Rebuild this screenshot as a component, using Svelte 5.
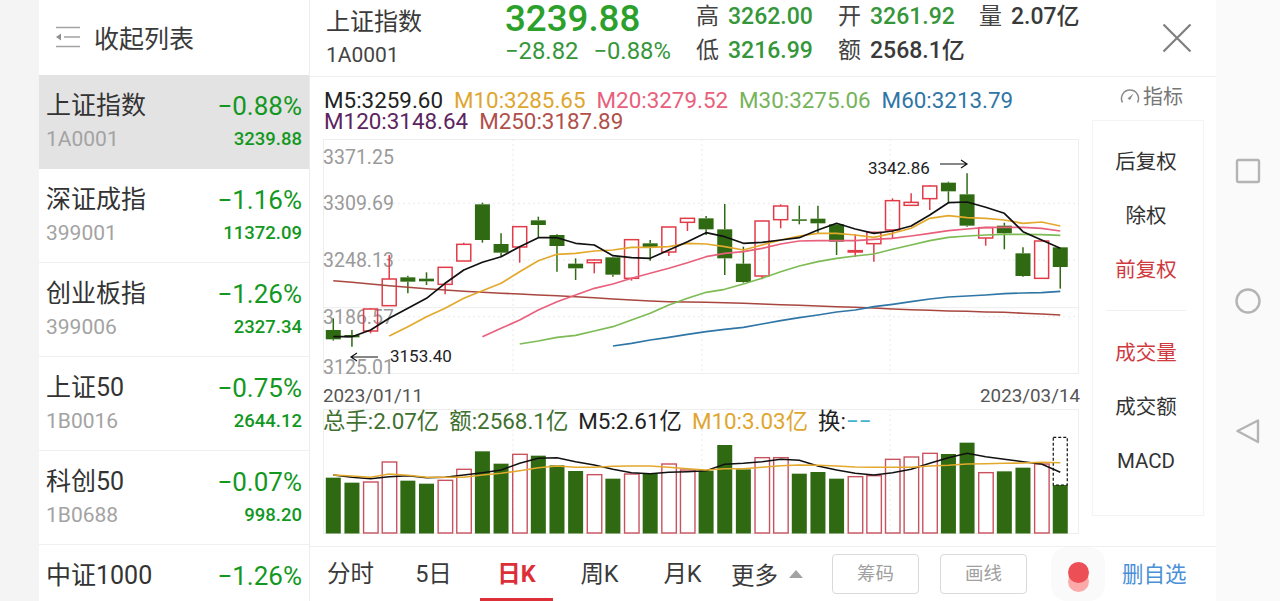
<script>
	const stocks = [
		{ name: '上证指数', code: '1A0001', pct: '−0.88%', price: '3239.88', active: true },
		{ name: '深证成指', code: '399001', pct: '−1.16%', price: '11372.09' },
		{ name: '创业板指', code: '399006', pct: '−1.26%', price: '2327.34' },
		{ name: '上证50', code: '1B0016', pct: '−0.75%', price: '2644.12' },
		{ name: '科创50', code: '1B0688', pct: '−0.07%', price: '998.20' },
		{ name: '中证1000', code: '1B0852', pct: '−1.26%', price: '6761.44' }
	];

	const tabs = ['分时', '5日', '日K', '周K', '月K'];

	const xAt = (i) => 333.3 + 18.64 * i;
	const kY = (z) => 130 + z / 3;
	const vY = (z) => 380 + z / 3;

	// hi, top, bottom, lo, red
	const candles = [
		[565, 600, 628, 632, 0], [600, 615, 622, 650, 0], [535, 537, 603, 610, 1], [375, 447, 527, 527, 1],
		[437, 442, 455, 490, 0], [427, 446, 454, 465, 0], [412, 412, 463, 493, 1], [338, 343, 393, 393, 1],
		[218, 223, 330, 338, 0], [310, 342, 368, 380, 0], [289, 290, 351, 398, 1], [260, 271, 285, 322, 0],
		[313, 315, 348, 425, 0], [385, 401, 415, 450, 0], [388, 390, 398, 430, 1], [380, 382, 434, 440, 0],
		[329, 329, 445, 452, 1], [330, 340, 352, 392, 0], [290, 291, 366, 378, 1], [264, 265, 277, 303, 1],
		[258, 265, 298, 315, 0], [222, 298, 385, 435, 0], [350, 401, 456, 458, 0], [272, 273, 438, 448, 1],
		[223, 228, 269, 295, 1], [227, 268, 271, 283, 0], [227, 266, 280, 312, 0], [280, 283, 335, 375, 0],
		[313, 362, 366, 380, 1], [305, 307, 341, 395, 1], [205, 212, 300, 327, 1], [190, 217, 226, 226, 1],
		[165, 168, 206, 240, 1], [155, 158, 184, 220, 0], [130, 193, 287, 290, 0], [292, 293, 324, 347, 1],
		[278, 287, 310, 358, 0], [352, 370, 438, 440, 0], [332, 333, 445, 447, 1], [352, 352, 411, 476, 0]
	];

	const ma5 = [620, 620, 600, 565, 535, 505, 460, 420, 397, 380, 350, 323, 323, 340, 345, 377, 383, 385, 360, 335, 308, 320, 340, 337, 330, 323, 300, 280, 297, 310, 303, 288, 255, 218, 216, 232, 250, 305, 330, 355];
	const ma10 = [618, 590, 560, 535, 505, 482, 460, 425, 392, 373, 370, 363, 360, 352, 352, 350, 340, 342, 350, 360, 345, 330, 318, 310, 310, 315, 322, 310, 295, 265, 257, 263, 265, 270, 280, 276, 288];
	const ma20 = [620, 595, 570, 540, 515, 495, 475, 462, 445, 430, 415, 398, 380, 370, 365, 355, 342, 333, 332, 332, 332, 328, 325, 318, 310, 302, 297, 292, 292, 292, 295, 303];
	const ma30 = [642, 633, 622, 616, 603, 590, 570, 550, 525, 505, 487, 478, 462, 445, 425, 408, 395, 385, 378, 372, 358, 345, 332, 322, 318, 315, 313, 313, 314, 316];
	const ma60 = [648, 640, 630, 622, 613, 605, 598, 592, 582, 572, 563, 555, 546, 540, 530, 523, 515, 507, 501, 498, 495, 491, 489, 488, 484];
	const ma250 = [452, 457, 462, 467, 472, 476, 480, 484, 487, 490, 492, 495, 497, 500, 503, 507, 510, 513, 515, 516, 517, 518, 520, 522, 524, 526, 528, 530, 532, 534, 537, 539, 541, 543, 544, 546, 547, 550, 552, 555];

	const line = (vals, start, toY) => vals.map((v, i) => `${xAt(start + i).toFixed(1)},${toY(v).toFixed(1)}`).join(' ');

	const kLines = [
		{ pts: ma250, start: 0, color: '#a8473f', w: 1.6 },
		{ pts: ma60, start: 15, color: '#2f76a6', w: 1.7 },
		{ pts: ma30, start: 10, color: '#7dbb55', w: 1.7 },
		{ pts: ma20, start: 8, color: '#e8607c', w: 1.7 },
		{ pts: ma10, start: 3, color: '#e3a92c', w: 1.7 },
		{ pts: ma5, start: 0, color: '#111111', w: 1.7 }
	];

	// bar top, red
	const volumes = [
		[293, 0], [308, 0], [306, 1], [246, 1], [302, 0], [311, 0], [301, 1], [268, 1], [214, 0], [251, 0],
		[223, 1], [227, 0], [256, 0], [273, 0], [284, 1], [296, 0], [282, 1], [282, 0], [252, 1], [270, 1],
		[272, 0], [195, 0], [268, 0], [233, 1], [233, 1], [281, 0], [276, 0], [296, 0], [290, 1], [287, 1],
		[238, 1], [231, 1], [220, 1], [222, 0], [188, 0], [278, 1], [274, 0], [263, 0], [252, 1], [315, 0]
	];

	const vol5 = [285, 292, 296, 290, 287, 293, 292, 285, 278, 270, 250, 235, 233, 245, 255, 268, 278, 281, 277, 275, 272, 253, 250, 245, 238, 241, 258, 270, 280, 285, 278, 268, 250, 233, 220, 230, 238, 245, 252, 277];
	const vol10 = [285, 288, 292, 282, 286, 292, 292, 292, 285, 280, 272, 263, 258, 262, 262, 259, 258, 258, 262, 266, 270, 266, 266, 262, 257, 255, 256, 258, 261, 262, 262, 262, 258, 256, 252, 251, 250, 249, 247, 248];
</script>

<div class="page">
	<div class="gutter"></div>

	<aside class="sidebar">
		<div class="collapse">
			<svg class="collapse-icon" width="26" height="22" viewBox="0 0 26 22">
				<path d="M1 1.5H25M9 11H25M1 20.5H25" stroke="#a3a3a3" stroke-width="1.6" fill="none" />
				<path d="M1 11L6 7.5V14.5Z" fill="#8f8f8f" />
			</svg>
			<span>收起列表</span>
		</div>
		{#each stocks as s}
			<div class="stock" class:active={s.active}>
				<div class="stock-row">
					<span class="stock-name">{s.name}</span>
					<span class="stock-pct">{s.pct}</span>
				</div>
				<div class="stock-row sub">
					<span class="stock-code">{s.code}</span>
					<span class="stock-price">{s.price}</span>
				</div>
			</div>
		{/each}
	</aside>

	<main class="main">
		<header class="head">
			<div class="title">
				<div class="title-name">上证指数</div>
				<div class="title-code">1A0001</div>
			</div>
			<div class="quote">
				<div class="quote-price">3239.88</div>
				<div class="quote-change"><span>−28.82</span><span>−0.88%</span></div>
			</div>
			<div class="stats">
				<span class="lbl">高</span><span class="val">3262.00</span>
				<span class="lbl">开</span><span class="val">3261.92</span>
				<span class="lbl">量</span><span class="val dark">2.07亿</span>
				<span class="lbl">低</span><span class="val">3216.99</span>
				<span class="lbl">额</span><span class="val dark">2568.1亿</span>
			</div>
			<svg class="close" width="32" height="32" viewBox="0 0 32 32">
				<path d="M2.5 2.5L29.5 29.5M29.5 2.5L2.5 29.5" stroke="#7f7f7f" stroke-width="2.2" fill="none" />
			</svg>
		</header>

		<div class="body">
			<section class="charts">
				<div class="legend">
					<div class="legend-row">
						<span class="c-black">M5:3259.60</span>
						<span class="c-gold">M10:3285.65</span>
						<span class="c-pink">M20:3279.52</span>
						<span class="c-green">M30:3275.06</span>
						<span class="c-blue">M60:3213.79</span>
					</div>
					<div class="legend-row">
						<span class="c-purple">M120:3148.64</span>
						<span class="c-brown">M250:3187.89</span>
					</div>
				</div>

				<svg class="kchart" width="757" height="235" viewBox="323 139 757 235">
					<rect x="323.5" y="139.5" width="755" height="234" fill="none" stroke="#eeeeee" />
					<line class="dot" x1="323" x2="1079" y1={kY(220)} y2={kY(220)} />
					<line class="dot" x1="323" x2="1079" y1={kY(390)} y2={kY(390)} />
					<line class="dot" x1="323" x2="1079" y1={kY(560)} y2={kY(560)} />
					<line x1="323" x2="1079" y1={kY(533)} y2={kY(533)} stroke="#ececec" />
					<line class="dot" x1="513" x2="513" y1="139" y2="373" />
					<line class="dot" x1="702" x2="702" y1="139" y2="373" />
					<line class="dot" x1="890" x2="890" y1="139" y2="373" />

					<text class="axis" x="323" y="164">3371.25</text>
					<text class="axis" x="323" y="210">3309.69</text>
					<text class="axis" x="323" y="267">3248.13</text>
					<text class="axis" x="323" y="324">3186.57</text>
					<text class="axis" x="323" y="374">3125.01</text>

					{#each candles as [hi, top, bottom, lo, red], i}
						{@const color = red ? '#e23b48' : '#2f6a12'}
						<line x1={xAt(i)} x2={xAt(i)} y1={kY(hi)} y2={kY(top)} stroke={color} stroke-width="1.5" />
						<line x1={xAt(i)} x2={xAt(i)} y1={kY(bottom)} y2={kY(lo)} stroke={color} stroke-width="1.5" />
						{#if red}
							<rect x={xAt(i) - 7} y={kY(top)} width="14" height={Math.max(kY(bottom) - kY(top), 1)} fill="none" stroke={color} stroke-width="1.5" />
						{:else}
							<rect x={xAt(i) - 7.5} y={kY(top)} width="15" height={Math.max(kY(bottom) - kY(top), 1.5)} fill={color} />
						{/if}
					{/each}

					{#each kLines as l}
						<polyline points={line(l.pts, l.start, kY)} fill="none" stroke={l.color} stroke-width={l.w} stroke-linejoin="round" />
					{/each}

					<text class="mark" x="390" y="362">3153.40</text>
					<path d="M378 357H351.5M357 353L351 357L357 361" fill="none" stroke="#111" stroke-width="1.2" />
					<text class="mark" x="868" y="174">3342.86</text>
					<path d="M940 164H967M961 160L967 164L961 168" fill="none" stroke="#111" stroke-width="1.2" />
				</svg>

				<div class="dates"><span>2023/01/11</span><span>2023/03/14</span></div>
				<div class="vol-legend">
					<span class="c-dgreen">总手:2.07亿</span>
					<span class="c-dgreen">额:2568.1亿</span>
					<span class="c-black">M5:2.61亿</span>
					<span class="c-gold">M10:3.03亿</span>
					<span class="c-black">换:<span class="c-cyan">−−</span></span>
				</div>

				<svg class="vchart" width="757" height="125" viewBox="323 409 757 125">
					<rect x="323.5" y="409.5" width="755" height="124" fill="none" stroke="#eeeeee" />
					<line class="dot" x1="513" x2="513" y1="409" y2="533" />
					<line class="dot" x1="702" x2="702" y1="409" y2="533" />
					<line class="dot" x1="890" x2="890" y1="409" y2="533" />

					{#each volumes as [top, red], i}
						{#if red}
							<rect x={xAt(i) - 7} y={vY(top)} width="14.5" height={533 - vY(top)} fill="none" stroke="#c9525f" stroke-width="1.4" />
						{:else}
							<rect x={xAt(i) - 7.5} y={vY(top)} width="15" height={533.5 - vY(top)} fill="#2f6a12" />
						{/if}
					{/each}
					<rect x={xAt(39) - 7} y={vY(172)} width="14" height={vY(315) - vY(172)} fill="none" stroke="#111" stroke-width="1.2" stroke-dasharray="3 2" />

					<polyline points={line(vol5, 0, vY)} fill="none" stroke="#111" stroke-width="1.5" />
					<polyline points={line(vol10, 0, vY)} fill="none" stroke="#e3a92c" stroke-width="1.6" />
				</svg>
			</section>

			<section class="side">
				<div class="indicator">
					<svg width="20" height="18" viewBox="0 0 20 18">
						<path d="M2.5 15.5A8.5 8.5 0 1 1 17.5 15.5" fill="none" stroke="#8a8a8a" stroke-width="1.5" />
						<path d="M7.5 11.5L13.5 6.5L10 13Z" fill="#8a8a8a" />
					</svg>
					<span>指标</span>
				</div>
				<div class="side-box">
					<div class="opt">后复权</div>
					<div class="opt">除权</div>
					<div class="opt red">前复权</div>
					<div class="sep"></div>
					<div class="opt red">成交量</div>
					<div class="opt">成交额</div>
					<div class="opt">MACD</div>
				</div>
			</section>
		</div>

		<footer class="tabs">
			{#each tabs as t}
				<div class="tab" class:on={t === '日K'}>{t}</div>
			{/each}
			<div class="more">更多<span class="caret"></span></div>
			<div class="btn">筹码</div>
			<div class="btn">画线</div>
			<div class="float"><span class="ball"></span></div>
			<div class="fav">删自选</div>
		</footer>
	</main>

	<nav class="sysbar">
		<svg width="26" height="26" viewBox="0 0 26 26"><rect x="2" y="2" width="22" height="22" rx="1.5" fill="none" stroke="#b4b4b4" stroke-width="2.4" /></svg>
		<svg width="26" height="26" viewBox="0 0 26 26"><circle cx="13" cy="13" r="11.5" fill="none" stroke="#b4b4b4" stroke-width="2.4" /></svg>
		<svg width="26" height="26" viewBox="0 0 26 26"><path d="M2.5 13L23 2.5V24Z" fill="none" stroke="#b4b4b4" stroke-width="2.4" stroke-linejoin="round" /></svg>
	</nav>
</div>

<style>
	:global(body) {
		margin: 0;
		background: #fff;
	}

	.page {
		display: flex;
		width: 1280px;
		height: 601px;
		overflow: hidden;
		font-family: Roboto, 'Noto Sans CJK SC', sans-serif;
		color: #333;
	}

	.gutter {
		width: 39px;
		flex-shrink: 0;
		background: #f4f4f4;
	}

	.sidebar {
		width: 270px;
		flex-shrink: 0;
		border-right: 1px solid #ececec;
		overflow: hidden;
	}

	.collapse {
		height: 75px;
		display: flex;
		align-items: center;
		padding: 0 0 2px 16px;
		box-sizing: border-box;
		gap: 13px;
		font-size: 25px;
		color: #3a3a3a;
	}

	.stock {
		height: 94px;
		padding: 11px 7px 0;
		box-sizing: border-box;
		border-bottom: 1px solid #f0f0f0;
		background: #fff;
	}

	.stock.active {
		background: #e3e3e3;
		border-bottom-color: #e3e3e3;
	}

	.stock-row {
		display: flex;
		justify-content: space-between;
		align-items: center;
		height: 36px;
	}

	.stock-row.sub {
		height: 30px;
		margin-top: 2px;
	}

	.stock-name {
		font-size: 25px;
		color: #333;
		padding-bottom: 3px;
	}

	.stock-pct {
		font-size: 26px;
		color: #13981f;
		padding-top: 4px;
	}

	.stock-code {
		font-size: 21px;
		color: #a3a3a3;
	}

	.stock-price {
		font-size: 18.5px;
		font-weight: 500;
		color: #13981f;
	}

	.main {
		flex: 1;
		display: flex;
		flex-direction: column;
		min-width: 0;
	}

	.head {
		height: 76px;
		flex-shrink: 0;
		display: flex;
		align-items: flex-start;
		padding-left: 16px;
		border-bottom: 1px solid #f0f0f0;
		position: relative;
	}

	.title {
		width: 179px;
		padding-top: 6px;
	}

	.title-name {
		font-size: 24px;
		line-height: 33px;
		color: #3a3a3a;
	}

	.title-code {
		font-size: 21px;
		line-height: 31px;
		margin-top: 1px;
		color: #444;
	}

	.quote {
		width: 191px;
	}

	.quote-price {
		font-size: 36.7px;
		font-weight: 500;
		line-height: 38px;
		color: #2ba02b;
	}

	.quote-change {
		display: flex;
		gap: 15px;
		font-size: 23.8px;
		line-height: 32px;
		margin-top: -3px;
		color: #36963a;
	}

	.stats {
		display: grid;
		grid-template-columns: 32px 110px 32px 109px 32px auto;
		grid-auto-rows: 34px;
		font-size: 23px;
		line-height: 34px;
	}

	.lbl {
		color: #444;
	}

	.val {
		color: #36963a;
		font-weight: 500;
	}

	.val.dark {
		color: #3a3a3a;
	}

	.close {
		position: absolute;
		right: 23px;
		top: 22px;
	}

	.body {
		flex: 1;
		display: flex;
		padding-left: 13px;
		min-height: 0;
	}

	.charts {
		width: 757px;
		flex-shrink: 0;
	}

	.legend {
		height: 62px;
		padding: 13px 0 0 1px;
		box-sizing: border-box;
		font-size: 22.4px;
		line-height: 21px;
	}

	.legend-row {
		display: flex;
		gap: 11px;
		white-space: nowrap;
	}

	.kchart,
	.vchart {
		display: block;
	}

	.dot {
		stroke: #e9e9e9;
		stroke-dasharray: 2 3;
	}

	.axis {
		font-size: 19.5px;
		fill: #9a9a9a;
	}

	.mark {
		font-size: 17px;
		fill: #222;
	}

	.dates {
		height: 20px;
		display: flex;
		justify-content: space-between;
		font-size: 18.8px;
		line-height: 20px;
		padding-top: 12px;
		color: #555;
	}

	.vol-legend {
		height: 3px;
		display: flex;
		gap: 10px;
		font-size: 22.4px;
		line-height: 31px;
		white-space: nowrap;
		position: relative;
		z-index: 1;
	}

	.c-black { color: #222; }
	.c-gold { color: #dfa62f; }
	.c-pink { color: #e8607c; }
	.c-green { color: #76b35a; }
	.c-blue { color: #2f76a6; }
	.c-purple { color: #5c2460; }
	.c-brown { color: #b0504a; }
	.c-dgreen { color: #3f7030; }
	.c-cyan { color: #45b1cf; }

	.side {
		width: 112px;
		margin-left: 12px;
		flex-shrink: 0;
	}

	.indicator {
		height: 43px;
		display: flex;
		align-items: center;
		justify-content: center;
		gap: 3px;
		font-size: 20px;
		color: #777;
		box-sizing: border-box;
		padding: 0 0 6px 7px;
	}

	.side-box {
		height: 396px;
		box-sizing: border-box;
		border: 1px solid #f4f4f4;
		padding: 14px 4px 0 0;
		display: flex;
		flex-direction: column;
		align-items: center;
	}

	.opt {
		height: 54px;
		line-height: 54px;
		font-size: 20.5px;
		color: #333;
	}

	.opt.red {
		color: #cf3a3f;
	}

	.sep {
		width: 80px;
		height: 1px;
		margin: 13px 0 15px;
		background: #f0f0f0;
	}

	.tabs {
		height: 55px;
		flex-shrink: 0;
		display: flex;
		align-items: center;
		border-top: 1px solid #f0f0f0;
		box-sizing: border-box;
		font-size: 23.5px;
		color: #3a3a3a;
	}

	.tab {
		width: 83px;
		height: 54px;
		line-height: 54px;
		text-align: center;
		box-sizing: border-box;
		position: relative;
		padding-right: 2px;
	}

	.tab.on {
		color: #dd2f38;
		font-weight: 700;
	}

	.tab.on::after {
		content: '';
		position: absolute;
		left: 4px;
		right: 6px;
		bottom: 0;
		height: 3px;
		background: #dd2f38;
	}

	.more {
		display: flex;
		align-items: center;
		width: 107px;
		padding-left: 6px;
		box-sizing: border-box;
		flex-shrink: 0;
	}

	.caret {
		margin-left: 11px;
		width: 0;
		height: 0;
		border-left: 7.5px solid transparent;
		border-right: 7.5px solid transparent;
		border-bottom: 8px solid #a3a3a3;
	}

	.btn {
		width: 87px;
		height: 40px;
		line-height: 38px;
		box-sizing: border-box;
		flex-shrink: 0;
		text-align: center;
		border: 1px solid #d9d9d9;
		border-radius: 4px;
		font-size: 18.5px;
		color: #a0a0a0;
		margin-right: 21px;
		margin-top: -1px;
	}

	.float {
		width: 54px;
		height: 54px;
		margin-left: 3px;
		flex-shrink: 0;
		background: #fafafa;
		border-radius: 16px;
		display: flex;
		align-items: flex-start;
		justify-content: center;
		padding-top: 15px;
		box-sizing: border-box;
	}

	.ball {
		width: 21px;
		height: 21px;
		border-radius: 50%;
		background: #ec4f55;
		box-shadow: 0 9px 0 0 #fbaaa9;
	}

	.fav {
		margin: 0 0 4px 17px;
		font-size: 21.5px;
		color: #4a90d9;
	}

	.sysbar {
		width: 64px;
		flex-shrink: 0;
		background: #fafafa;
		display: flex;
		flex-direction: column;
		align-items: center;
		justify-content: center;
		gap: 104px;
	}
</style>
